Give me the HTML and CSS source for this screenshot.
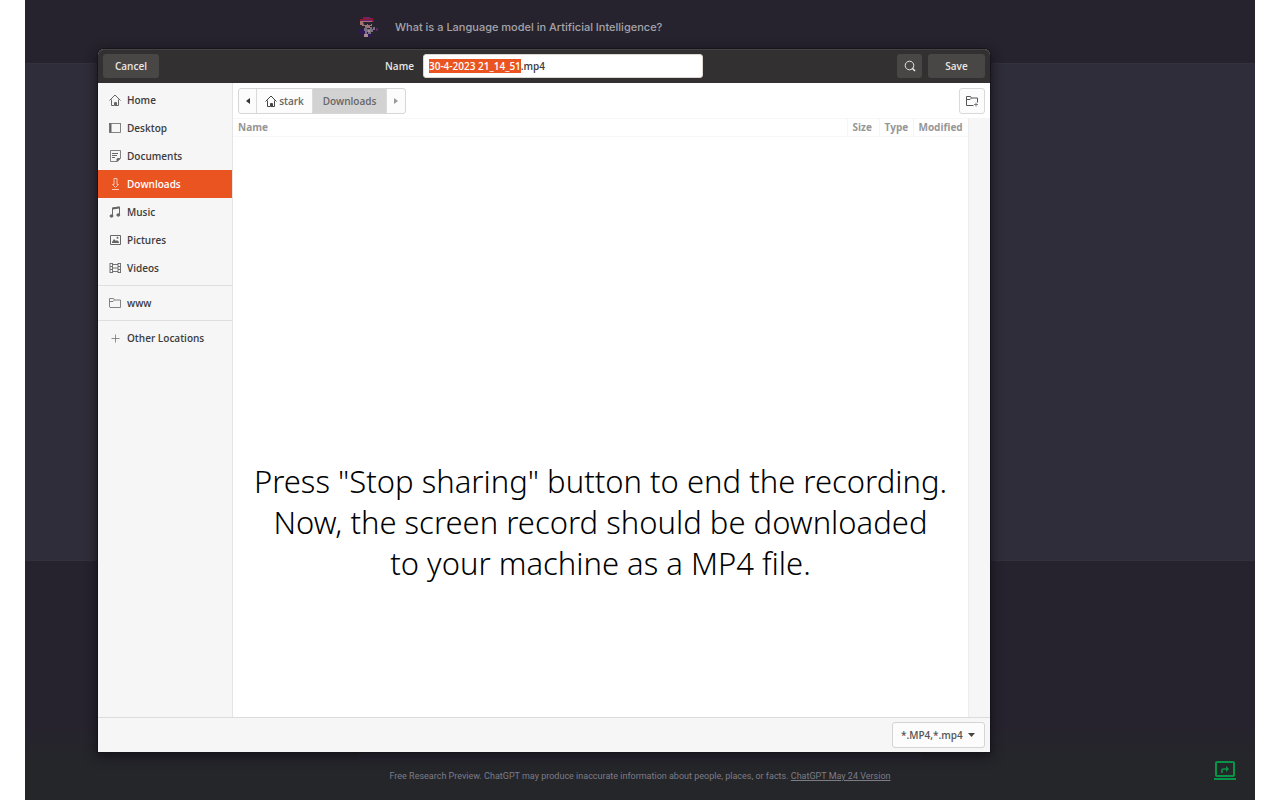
FILE: index.html
```html
<!DOCTYPE html>
<html lang="en">
<head>
<meta charset="utf-8">
<title>Save recording</title>
<link rel="stylesheet" href="styles.css">
</head>
<body>
<div class="page">
  <header class="question">
    <svg class="avatar" viewBox="0 0 24 24" aria-hidden="true">
      <path fill="#30155c" d="M3 14h5v2h2v4H6v-2H3zM10 19h5v3h-5z"/>
      <path fill="#8d1735" d="M7 2h7v1h3v2h1v2h-2V5H7v2H4V4h3z"/>
      <path fill="#6b2372" d="M9 2h5v2H9zM6 5h11v1H6z"/>
      <path fill="#a47472" d="M4 6h2v4H4zM6 6h10v5h-2v2H9v-2H6z"/>
      <path fill="#262332" d="M7 7h10v2h-2v1h-3V9h-1v1H8z"/>
      <path fill="#77717f" d="M9 12h2v2h3v-2h2v2h1v-2h2v3h-2v2h-2v2h-3v-2h-1v3H9v-4H8v-3h1z"/>
      <path fill="#aa8b91" d="M8 19h4v3H8zM12 15h2v2h-2z"/>
      <path fill="#5f236c" d="M20 13h2v3h-2z"/>
    </svg>
    <p class="question-text">What is a Language model in Artificial Intelligence?</p>
  </header>
  <div class="answer"></div>
  <footer class="page-footer">
    <div class="prompt-box"></div>
    <p class="notice">Free Research Preview. ChatGPT may produce inaccurate information about people, places, or facts. <a href="#">ChatGPT May 24 Version</a></p>
    <button class="share" type="button" aria-label="Share screen">
      <svg viewBox="0 0 22 19" fill="none" stroke="#089447" stroke-width="2" aria-hidden="true"><rect x="2" y="1" width="18" height="14" rx="1"/><path d="M0 18h22"/><path d="M8 12V9q0-1 1-1h4" stroke-width="1.6"/><path d="M12 5l3 3-3 3z" fill="#089447" stroke="none"/></svg>
    </button>
  </footer>

  <form class="dialog" role="dialog" aria-label="Save file">
    <div class="titlebar">
      <button class="dark-button cancel" type="button">Cancel</button>
      <div class="name-field">
        <label for="filename">Name</label>
        <input id="filename" type="text" value="30-4-2023 21_14_51.mp4" autofocus>
      </div>
      <div class="actions">
        <button class="dark-button search" type="button" aria-label="Search">
          <svg class="icon" viewBox="0 0 12 12" fill="none" stroke="currentColor" aria-hidden="true"><circle cx="5.500" cy="5.500" r="4.300"/><path d="M8 8l3 3" stroke-width="1.600"/></svg>
        </button>
        <button class="dark-button save" type="button">Save</button>
      </div>
    </div>

    <div class="content">
      <nav class="sidebar">
        <a href="#"><svg class="icon" viewBox="0 0 12 12" fill="none" stroke="currentColor" aria-hidden="true"><path d="M.5 6.500L6 1l5.500 5.500M2.500 5.500v6h3v-3h2v3h2v-6"/><path d="M7 9v3" stroke-width="2"/></svg>Home</a>
        <a href="#"><svg class="icon" viewBox="0 0 12 12" fill="none" stroke="currentColor" aria-hidden="true"><rect x=".5" y="1.500" width="11" height="9" stroke-width=".8"/><path d="M1.500 1.500v9" stroke-width="2"/></svg>Desktop</a>
        <a href="#"><svg class="icon" viewBox="0 0 12 12" fill="none" stroke="currentColor" aria-hidden="true"><path d="M1.500.5h10v8l-3 3h-7z" stroke-width=".8"/><path d="M3 3.500h6M3 5.500h5M3 7.500h3"/><path d="M7.500 12V9l1-1h3z" fill="currentColor" stroke="none"/></svg>Documents</a>
        <a class="current" href="#" aria-current="page"><svg class="icon" viewBox="0 0 12 12" fill="none" stroke="currentColor" aria-hidden="true"><path d="M5 .5h3v6h1.500l-3 3-3-3H5zM3 11.500h7"/></svg>Downloads</a>
        <a href="#"><svg class="icon" viewBox="0 0 12 12" fill="none" stroke="currentColor" aria-hidden="true"><path d="M3.500 10V2l7-1v8"/><path d="M3.500 2.500l7-1" stroke-width="2"/><ellipse cx="2.500" cy="10" rx="1.500" ry="1.200" fill="currentColor"/><ellipse cx="9.300" cy="9" rx="1.500" ry="1.200" fill="currentColor"/></svg>Music</a>
        <a href="#"><svg class="icon" viewBox="0 0 12 12" fill="none" stroke="currentColor" aria-hidden="true"><path d="M1.500 1.500v9h10v-9z"/><path d="M3 9V8l2-3 2 2 1-1 2 2v1z" fill="currentColor" stroke="none"/><circle cx="8.500" cy="3.800" r="1" fill="currentColor" stroke="none"/></svg>Pictures</a>
        <a href="#"><svg class="icon" viewBox="0 0 12 12" fill="none" stroke="currentColor" stroke-width=".9" aria-hidden="true"><path d="M1 1v10M11.500 1v10M3.500 1v10M9 1v10M1 1.500h2.500M9 1.500h2.500M1 4.500h2.500M9 4.500h2.500M1 7.500h2.500M9 7.500h2.500M1 10.500h2.500M9 10.500h2.500M3.500 2.500H9M3.500 6H9M3.500 9.500H9"/></svg>Videos</a>
        <hr>
        <a href="#"><svg class="icon" viewBox="0 0 12 12" fill="none" stroke="currentColor" stroke-width=".8" aria-hidden="true"><path d="M.5 10V1.500h4l1 1.500h6v7.500H1zM.5 4.500h3.500L5.500 3"/></svg>www</a>
        <hr>
        <a href="#"><svg class="icon" viewBox="0 0 12 12" fill="none" stroke="currentColor" stroke-width=".7" aria-hidden="true"><path d="M6.500 2.500v8M2.500 6.500h8"/></svg>Other Locations</a>
      </nav>

      <section class="browser">
        <div class="toolbar">
          <div class="pathbar">
            <button type="button" class="step" aria-label="Back"><svg viewBox="0 0 4 6" aria-hidden="true"><path d="M4 0v6L0 3z"/></svg></button>
            <button type="button" class="place"><svg class="icon" viewBox="0 0 12 12" fill="none" stroke="currentColor" aria-hidden="true"><path d="M.5 6.500L6 1l5.500 5.500M2.500 5.500v6h3v-3h2v3h2v-6"/><path d="M7 9v3" stroke-width="2"/></svg>stark</button>
            <button type="button" class="folder active">Downloads</button>
            <button type="button" class="step forward" aria-label="Forward"><svg viewBox="0 0 4 6" aria-hidden="true"><path d="M0 0v6l4-3z"/></svg></button>
          </div>
          <button type="button" class="new-folder" aria-label="New folder"><svg class="icon" viewBox="0 0 12 12" fill="none" stroke="currentColor" aria-hidden="true"><path d="M7.500 10.500H.5v-9h4l1 1.500h6v4.500M.5 4.500h3.500L5.500 3"/><path d="M8 9.500h4M10 7.500v4" stroke-width=".7"/></svg></button>
        </div>
        <div class="listing">
          <div class="files">
            <table>
              <thead><tr><th class="col-name">Name</th><th class="col-size">Size</th><th class="col-type">Type</th><th class="col-modified">Modified</th></tr></thead>
            </table>
            <p class="caption">Press "Stop sharing" button to end the recording.<br>Now, the screen record should be downloaded<br>to your machine as a MP4 file.</p>
          </div>
          <div class="gutter"></div>
        </div>
      </section>
    </div>

    <div class="bottombar">
      <div class="filter">
        <select aria-label="File type"><option>*.MP4,*.mp4</option></select>
        <svg class="caret" viewBox="0 0 7 4" aria-hidden="true"><path d="M0 0h7L3.500 4z"/></svg>
      </div>
    </div>
  </form>
</div>
<script src="dialog.js"></script>
</body>
</html>
```
FILE: styles.css
```css
* { box-sizing: border-box; }
body { margin: 0; background: #fff; font-family: "Open Sans", "Noto Sans", sans-serif; font-size: 10px; color: #3d3d3d; }
button, input, select { font: inherit; color: inherit; margin: 0; }
p { margin: 0; }
.page { position: relative; display: flex; flex-direction: column; height: 100vh; margin: 0 25px; background: linear-gradient(#26232e 91%, #25262a 95%); overflow: hidden; }
.question { display: flex; align-items: center; gap: 15px; height: 63px; padding: 0 331px 9px; flex: none; }
.avatar { width: 24px; height: 24px; }
.question-text { font-family: Inter, sans-serif; font-size: 11px; font-weight: 500; color: #a5a4aa; white-space: nowrap; }
.answer { flex: 1; background: #302d3a; border-top: 1px solid #34313d; border-bottom: 1px solid #34313d; }
.page-footer { position: relative; display: flex; flex-direction: column; justify-content: flex-end; height: 239px; padding: 0 332px 16px; flex: none; }
.prompt-box { height: 32px; margin-bottom: 8px; border-radius: 5px; background: #292733; }
.notice { font-family: Roboto, sans-serif; font-size: 9px; line-height: 15px; color: #7d7c86; text-align: center; white-space: nowrap; }
.notice a { color: inherit; }
.share { position: absolute; right: 19px; bottom: 20px; padding: 0; border: 0; background: none; width: 22px; height: 19px; }
.share svg { display: block; width: 22px; height: 19px; }

.dialog { position: absolute; inset: 49px 265px 48px 73px; display: flex; flex-direction: column; border-radius: 6px 6px 0 0; background: #fff; box-shadow: 0 0 0 1px #17151c, 0 3px 12px 1px #131118; }
.titlebar { display: grid; grid-template-columns: 1fr auto 1fr; align-items: center; height: 34px; padding: 0 5px; border-radius: 6px 6px 0 0; background: #323030; box-shadow: inset 0 1px #454241; color: #e9e6e3; font-weight: 600; flex: none; }
.dark-button { height: 24px; padding: 0; border: 0; border-radius: 3px; background: #494745; }
.cancel { width: 56px; }
.name-field { display: flex; align-items: center; gap: 9px; }
.name-field input { width: 280px; height: 24px; padding: 0 5px; border: 1px solid #ddd5cf; border-radius: 3px; background: #fff; color: #3d3d3d; font-weight: 600; outline: 0; }
.name-field input::selection { background: #e95420; color: #fff; }
.actions { display: flex; gap: 6px; justify-content: flex-end; }
.search { display: grid; place-items: center; width: 25px; }
.save { width: 57px; }
.icon { display: block; width: 12px; height: 12px; flex: none; }

.content { display: flex; flex: 1; min-height: 0; }
.sidebar { width: 135px; padding-top: 3px; border-right: 1px solid #e4e4e4; background: #f6f6f6; flex: none; }
.sidebar a { display: flex; align-items: center; gap: 6px; height: 28px; padding-left: 11px; color: #3d3d3d; font-weight: 600; text-decoration: none; }
.sidebar .icon { color: #666; }
.sidebar .current { background: #e95420; color: #fff; }
.sidebar .current .icon { color: #fbc6b3; }
.sidebar hr { margin: 3px 0; border: 0; border-top: 1px solid #dfdfdf; }

.browser { display: flex; flex-direction: column; flex: 1; min-width: 0; }
.toolbar { display: flex; justify-content: space-between; align-items: center; height: 35px; padding: 0 5px; flex: none; }
.pathbar { display: flex; height: 26px; border: 1px solid #d6d6d6; border-radius: 3px; background: #fcfcfc; overflow: hidden; }
.pathbar button { display: flex; align-items: center; justify-content: center; padding: 0; border: 0; border-right: 1px solid #dadada; background: none; color: #666; font-weight: 600; }
.pathbar button:last-child { border-right: 0; }
.pathbar .step { width: 18px; }
.pathbar .step svg { width: 4px; height: 6px; fill: #333; }
.pathbar .forward svg { fill: #999; }
.pathbar .place { width: 56px; gap: 2px; }
.pathbar .place .icon { color: #444; }
.pathbar .active { width: 74px; background: #d2d2d2; }
.new-folder { display: grid; place-items: center; width: 26px; height: 26px; padding: 0; border: 1px solid #d9d9d9; border-radius: 3px; background: #fcfcfc; color: #555; }
.listing { display: flex; flex: 1; min-height: 0; }
.files { display: flex; flex-direction: column; justify-content: space-between; flex: 1; min-width: 0; padding-bottom: 133px; }
.files table { width: 100%; table-layout: fixed; border-collapse: collapse; border-top: 1px solid #f7f7f7; border-bottom: 1px solid #f7f7f7; }
.files th { height: 18px; padding: 0 0 0 5px; border-right: 1px solid #f5f5f5; color: #969696; font-weight: 700; line-height: 17px; text-align: left; }
.files th:last-child { border-right: 0; }
.col-size { width: 32px; }
.col-type { width: 34px; }
.col-modified { width: 55px; }
.caption { color: #000; font-family: "Noto Sans", sans-serif; font-size: 31px; font-weight: 300; line-height: 41px; text-align: center; white-space: nowrap; }
.gutter { width: 22px; border-left: 1px solid #ececec; background: #f6f6f6; }
.bottombar { display: flex; justify-content: flex-end; align-items: center; height: 35px; padding: 0 5px; border-top: 1px solid #dcdcdc; background: #f6f6f6; flex: none; }
.filter { position: relative; }
.filter select { display: block; width: 93px; height: 26px; padding: 0 8px; border: 1px solid #d4d4d4; border-radius: 3px; appearance: none; background: #fcfcfc; font-weight: 600; color: #555; }
.caret { position: absolute; right: 10px; top: 11px; width: 7px; height: 4px; fill: #444; pointer-events: none; }
```
FILE: dialog.js
```js
// Select the base name so typing keeps the extension.
const filename = document.getElementById("filename");
filename.focus();
filename.setSelectionRange(0, filename.value.lastIndexOf("."));
```
